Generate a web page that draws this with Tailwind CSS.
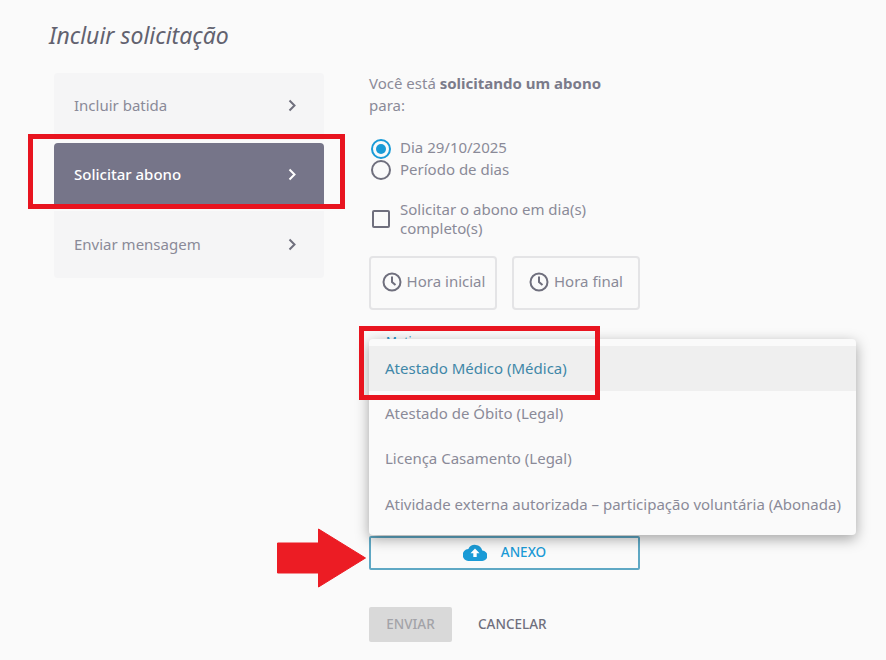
<!DOCTYPE html>
<html lang="en">
<head>
    <meta charset="UTF-8">
    <title>Incluir solicitação</title>
    <script src="https://cdn.jsdelivr.net/npm/@tailwindcss/browser@4"></script>
</head>
<body class="bg-[#fafafa] text-[#8a8a98] font-['Noto_Sans',sans-serif] text-[15px]">
    <div class="relative w-[886px] h-[660px] overflow-hidden pl-[49px] pt-[20px]">
        <!-- Title -->
        <h1 class="text-[23px] leading-[30px] italic text-[#62626f]">Incluir solicitação</h1>

        <div class="flex mt-[23px] ml-[5px] gap-[45px]">
            <!-- Side menu -->
            <div class="w-[270px] h-[205px] flex flex-col gap-[3px]">
                <div class="h-[67px] bg-[#f5f5f6] rounded-t flex items-center justify-between pl-[20px] pr-[27px] pb-[3px]">
                    <span>Incluir batida</span>
                    <svg width="9" height="13" viewBox="0 0 9 13" fill="none" stroke="#6f6f7d" stroke-width="2"><path d="M1.5 1.5l5 5-5 5"/></svg>
                </div>
                <div class="h-[65px] bg-[#767589] rounded-t flex items-center justify-between pl-[20px] pr-[27px] pb-[2px] text-white font-medium">
                    <span>Solicitar abono</span>
                    <svg width="9" height="13" viewBox="0 0 9 13" fill="none" stroke="#ffffff" stroke-width="2"><path d="M1.5 1.5l5 5-5 5"/></svg>
                </div>
                <div class="h-[67px] bg-[#f5f5f6] rounded-b flex items-center justify-between pl-[20px] pr-[27px] pb-[1px]">
                    <span>Enviar mensagem</span>
                    <svg width="9" height="13" viewBox="0 0 9 13" fill="none" stroke="#6f6f7d" stroke-width="2"><path d="M1.5 1.5l5 5-5 5"/></svg>
                </div>
            </div>

            <!-- Form -->
            <div class="w-[271px]">
                <p class="leading-[22px] -mt-[1px]">Você está <b class="font-bold text-[#7b7b8a]">solicitando um abono</b><br>para:</p>

                <div class="mt-[22px] flex items-center gap-[9px] h-[22px]">
                    <span class="w-[20px] h-[20px] ml-[2px] rounded-full border-2 border-[#1a9bd7] flex items-center justify-center"><span class="w-[10px] h-[10px] rounded-full bg-[#1a9bd7]"></span></span>
                    <span class="pb-[3px]">Dia 29/10/2025</span>
                </div>
                <div class="-mt-[1px] flex items-center gap-[9px] h-[22px]">
                    <span class="w-[20px] h-[20px] ml-[2px] rounded-full border-2 border-[#6f6f7d]"></span>
                    <span class="pb-[2px]">Período de dias</span>
                </div>

                <div class="mt-[19px] flex items-center gap-[10px]">
                    <span class="w-[18px] h-[18px] ml-[3px] border-2 border-[#6f6f7d] rounded-[2px] shrink-0"></span>
                    <span class="leading-[19px]">Solicitar o abono em dia(s)<br>completo(s)</span>
                </div>

                <div class="mt-[18px] flex gap-[15px]">
                    <div class="w-[128px] h-[54px] border-2 border-[#e4e4e6] rounded flex items-center justify-center gap-[5px] pb-[3px] pl-[1px]">
                        <svg width="20" height="20" viewBox="0 0 20 20" fill="none" stroke="#6f6f7d" stroke-width="2"><circle cx="10" cy="10" r="8.5"/><path d="M10 4.5V10l3.5 3"/></svg>
                        <span>Hora inicial</span>
                    </div>
                    <div class="w-[128px] h-[54px] border-2 border-[#e4e4e6] rounded flex items-center justify-center gap-[5px] pb-[3px]">
                        <svg width="20" height="20" viewBox="0 0 20 20" fill="none" stroke="#6f6f7d" stroke-width="2"><circle cx="10" cy="10" r="8.5"/><path d="M10 4.5V10l3.5 3"/></svg>
                        <span>Hora final</span>
                    </div>
                </div>

                <div class="mt-[24px] ml-[17px] text-[12px] leading-[16px] text-[#1a8fc4] h-[16px]">Motivo</div>

                <div class="mt-[186px] h-[34px] border-2 border-[#5fa8c4] rounded-[2px] flex items-center justify-center gap-[14px] pb-[2px] text-[13.5px] font-medium text-[#1a9bd7]">
                    <svg width="24" height="17" viewBox="0 0 24 17"><path fill="#1a9bd7" d="M19.3 6.6A7.5 7.5 0 0 0 5.3 5 6 6 0 0 0 6 17h13a5 5 0 0 0 .3-10.4z"/><path fill="#ffffff" d="M12 4.5l4.5 4.7h-2.8V13h-3.4V9.2H7.5z"/></svg>
                    <span>ANEXO</span>
                </div>

                <div class="mt-[37px] flex items-center gap-[26px] text-[13.5px] font-medium">
                    <div class="w-[83px] h-[35px] bg-[#d9d9d9] rounded-[2px] flex items-center justify-center text-[#a3a3a8]">ENVIAR</div>
                    <span class="text-[#6f6f7d]">CANCELAR</span>
                </div>
            </div>
        </div>

        <!-- Dropdown list over the form -->
        <div class="absolute left-[369px] top-[339px] w-[487px] h-[196px] bg-[#fafafa] rounded shadow-[0_4px_14px_rgba(0,0,0,0.35)] pt-[7px]">
            <div class="h-[45px] bg-[#efefef] flex items-center pl-[16px] text-[#3f87a8]">Atestado Médico (Médica)</div>
            <div class="h-[45px] flex items-center pl-[16px]">Atestado de Óbito (Legal)</div>
            <div class="h-[45px] flex items-center pl-[16px]">Licença Casamento (Legal)</div>
            <div class="h-[47px] flex items-center pl-[16px]">Atividade externa autorizada – participação voluntária (Abonada)</div>
        </div>

        <!-- Red annotations -->
        <div class="absolute left-[28px] top-[134px] w-[317px] h-[75px] border-[5px] border-[#e8141f]"></div>
        <div class="absolute left-[359px] top-[326px] w-[241px] h-[74px] border-[5px] border-[#e8141f]"></div>
        <svg class="absolute left-[276px] top-[528px]" width="90" height="60" viewBox="0 0 90 60"><path fill="#ec1c24" stroke="#ec1c24" stroke-linejoin="round" d="M1.5 15H42.5V1L89.5 30 42.5 59V45H1.5z"/></svg>
    </div>
</body>
</html>
